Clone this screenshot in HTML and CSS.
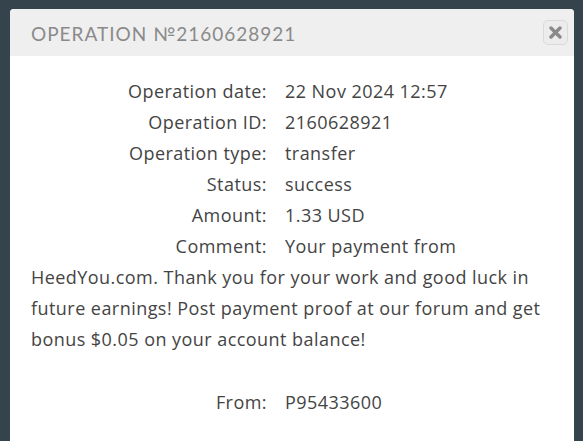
FILE: index.html
```
<!DOCTYPE html>
<html>
<head>
<meta charset="utf-8">
<link rel="stylesheet" href="styles.css">
</head>
<body>
<div class="modal">
  <div class="header">
    <div class="title">OPERATION №2160628921</div>
    <button class="close" aria-label="Close"><svg width="13" height="13" viewBox="0 0 13 13"><path d="M2 2 L11 11 M11 2 L2 11" stroke="#8a8a8a" stroke-width="3.4" stroke-linecap="round"/></svg></button>
  </div>
  <div class="content">
    <div class="row"><span class="label">Operation date:</span>22 Nov 2024 12:57</div>
    <div class="row"><span class="label">Operation ID:</span>2160628921</div>
    <div class="row"><span class="label">Operation type:</span>transfer</div>
    <div class="row"><span class="label">Status:</span>success</div>
    <div class="row"><span class="label">Amount:</span>1.33 USD</div>
    <div class="row"><span class="label">Comment:</span>Your payment from HeedYou.com. Thank you for your work and good luck in future earnings! Post payment proof at our forum and get bonus $0.05 on your account balance!</div>
    <div class="row spaced"><span class="label">From:</span>P95433600</div>
  </div>
</div>
</body>
</html>
```
FILE: styles.css
```
html, body {
  margin: 0;
  padding: 0;
}
body {
  background: #35434c;
  height: 441px;
  overflow: hidden;
}
.modal {
  margin: 9px 9px 0 10px;
  background: #ffffff;
  border-radius: 4px 4px 0 0;
  height: 440px;
  overflow: hidden;
}
.header {
  height: 47px;
  background: #efefef;
  display: flex;
  align-items: center;
  justify-content: space-between;
  padding: 0 6px 0 21px;
}
.title {
  font-family: "Lato", sans-serif;
  font-size: 19px;
  letter-spacing: 1px;
  color: #8a8a8a;
  padding-top: 1px;
}
.close {
  width: 25px;
  height: 25px;
  border: 1px solid #dadada;
  border-radius: 5px;
  background: #ececec;
  padding: 0;
  display: flex;
  align-items: center;
  justify-content: center;
}
.close svg {
  display: block;
}
.content {
  padding: 20px 21px;
  font-family: "Open Sans", sans-serif;
  font-size: 18px;
  letter-spacing: 0.45px;
  line-height: 31px;
  color: #444444;
}
.label {
  display: inline-block;
  width: 236px;
  text-align: right;
  margin-right: 18px;
}
.spaced {
  margin-top: 32px;
}
```
